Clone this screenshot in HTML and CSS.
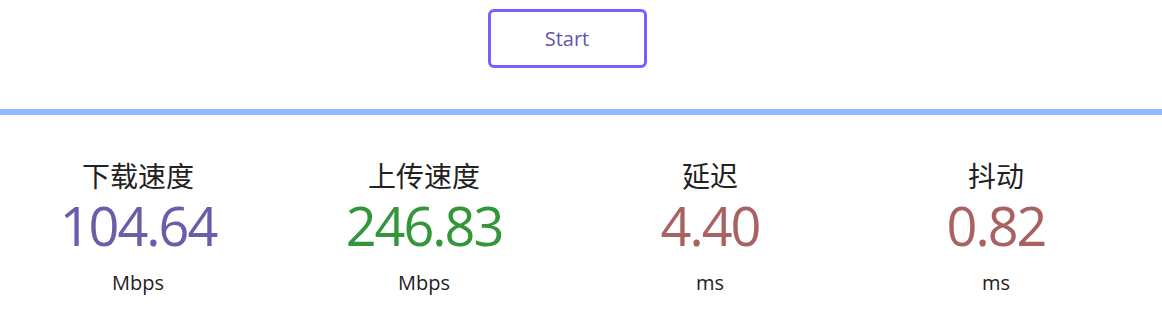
FILE: index.html
```html
<!DOCTYPE html>
<html lang="zh-CN">
<head>
  <meta charset="UTF-8">
  <meta name="viewport" content="width=device-width, initial-scale=1.0">
  <title>测速</title>
  <link rel="stylesheet" href="styles.css">
</head>
<body>
  <header class="top">
    <button class="start-btn" type="button">Start</button>
  </header>
  <div class="bar"></div>
  <main class="stats">
    <div class="stat">
      <div class="stat-title">下载速度</div>
      <div class="stat-value down">104.64</div>
      <div class="stat-unit">Mbps</div>
    </div>
    <div class="stat">
      <div class="stat-title">上传速度</div>
      <div class="stat-value up">246.83</div>
      <div class="stat-unit">Mbps</div>
    </div>
    <div class="stat">
      <div class="stat-title">延迟</div>
      <div class="stat-value ping">4.40</div>
      <div class="stat-unit">ms</div>
    </div>
    <div class="stat">
      <div class="stat-title">抖动</div>
      <div class="stat-value ping">0.82</div>
      <div class="stat-unit">ms</div>
    </div>
  </main>
</body>
</html>
```

FILE: styles.css
```css
body {
  margin: 0;
  font-family: "Open Sans", "Noto Sans CJK SC", sans-serif;
  color: #222;
  background: #fff;
}
.top {
  display: flex;
  justify-content: center;
  padding-top: 9px;
  padding-right: 28px;
}
.start-btn {
  width: 159px;
  height: 59px;
  border: 3px solid #7460ff;
  border-radius: 6px;
  background: #fff;
  color: #5f55b5;
  font-family: inherit;
  font-size: 20px;
  cursor: pointer;
}
.bar {
  margin-top: 41px;
  height: 6px;
  background-color: #94b9fb;
}
.stats {
  display: grid;
  grid-template-columns: repeat(4, 286px);
  padding-top: 44px;
}
.stat {
  display: flex;
  flex-direction: column;
  align-items: center;
  padding-right: 10px;
}
.stat-title {
  font-family: "Noto Sans CJK SC", sans-serif;
  font-size: 28px;
  line-height: 32px;
  margin-bottom: 4px;
}
.stat-value {
  font-size: 54px;
  line-height: 56px;
  margin-top: 2px;
  letter-spacing: -2px;
}
.stat-value.down {
  color: #685ea9;
}
.stat-value.up {
  color: #32963a;
}
.stat-value.ping {
  color: #a86262;
}
.stat-unit {
  margin-top: 18px;
  font-size: 20px;
  line-height: 24px;
}
```
